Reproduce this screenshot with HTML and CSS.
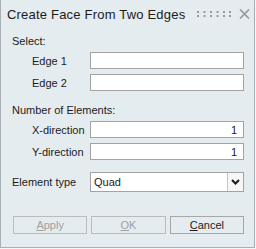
FILE: index.html
```html
<!DOCTYPE html>
<html lang="en">
<head>
    <meta charset="UTF-8">
    <title>Create Face From Two Edges</title>
    <link rel="stylesheet" href="styles.css">
</head>
<body>
    <div class="dialog">
        <div class="titlebar">
            <span class="title">Create Face From Two Edges</span>
            <svg class="grip" width="34" height="6" viewBox="0 0 34 6">
                <g fill="#9a9a9a">
                    <rect x="0" y="0" width="2" height="2"/><rect x="6.5" y="0" width="2" height="2"/>
                    <rect x="13" y="0" width="2" height="2"/><rect x="19.5" y="0" width="2" height="2"/>
                    <rect x="26" y="0" width="2" height="2"/><rect x="32" y="0" width="2" height="2"/>
                    <rect x="0" y="4" width="2" height="2"/><rect x="6.5" y="4" width="2" height="2"/>
                    <rect x="13" y="4" width="2" height="2"/><rect x="19.5" y="4" width="2" height="2"/>
                    <rect x="26" y="4" width="2" height="2"/><rect x="32" y="4" width="2" height="2"/>
                </g>
            </svg>
            <svg class="close" width="11" height="10" viewBox="0 0 11 10">
                <path d="M1 0.5 L10 9.5 M10 0.5 L1 9.5" stroke="#9a9a9a" stroke-width="1.7" fill="none"/>
            </svg>
        </div>

        <div class="content">
            <div class="heading heading-first">Select:</div>
            <div class="rows">
                <label class="sub">Edge 1</label>
                <input class="field" type="text">
                <label class="sub">Edge 2</label>
                <input class="field" type="text">
            </div>

            <div class="heading heading-next">Number of Elements:</div>
            <div class="rows">
                <label class="sub">X-direction</label>
                <input class="field num" type="text" value="1">
                <label class="sub">Y-direction</label>
                <input class="field num" type="text" value="1">
            </div>

            <div class="rows type-row">
                <label>Element type</label>
                <div class="combo">
                    <span class="combo-value">Quad</span>
                    <span class="combo-btn">
                        <svg width="9" height="6" viewBox="0 0 9 6">
                            <path d="M1 1 L4.5 4.5 L8 1" stroke="#1a1a1a" stroke-width="2" fill="none"/>
                        </svg>
                    </span>
                </div>
            </div>

            <div class="buttons">
                <button class="btn" disabled><u>A</u>pply</button>
                <button class="btn" disabled><u>O</u>K</button>
                <button class="btn"><u>C</u>ancel</button>
            </div>
        </div>
    </div>
</body>
</html>
```

FILE: styles.css
```css
:root {
    --dialog-bg: #e5ecf0;
    --dialog-border: #a9b0b5;
    --field-border: #a3a3a3;
    --text-color: #1b1b1b;
    --muted: #a0a0a0;
}

body {
    margin: 0;
    background: #f4f6f8;
    font-family: "Liberation Sans", Arial, sans-serif;
    font-size: 11px;
    color: var(--text-color);
}

.dialog {
    box-sizing: border-box;
    width: 255px;
    height: 248px;
    background: var(--dialog-bg);
    border: 1px solid var(--dialog-border);
    border-top: none;
}

.titlebar {
    height: 28px;
    display: flex;
    align-items: center;
    padding: 0 4px 0 6px;
}

.title {
    font-size: 13px;
    line-height: 16px;
    letter-spacing: 0.2px;
    padding-top: 1px;
}

.grip {
    margin-left: auto;
}

.close {
    margin-left: 8px;
}

.content {
    padding: 0 10px 0 11px;
}

.heading {
    line-height: 13px;
    margin-bottom: 4px;
}

.heading-first {
    margin-top: 7px;
}

.heading-next {
    margin-top: 13px;
}

.rows {
    display: grid;
    grid-template-columns: 78px 1fr;
    row-gap: 5px;
    align-items: center;
}

.sub {
    padding-left: 20px;
}

.field {
    box-sizing: border-box;
    height: 17px;
    margin: 0;
    border: 1px solid var(--field-border);
    background: #fff;
    font: inherit;
    color: var(--text-color);
    padding: 0 6px 0 3px;
    outline: none;
}

.field.num {
    text-align: right;
}

.type-row {
    margin-top: 12px;
}

.combo {
    box-sizing: border-box;
    height: 20px;
    display: flex;
    border: 1px solid var(--field-border);
    background: #fff;
}

.combo-value {
    flex: 1;
    padding-left: 3px;
    line-height: 18px;
}

.combo-btn {
    width: 15px;
    border-left: 1px solid #c4c4c4;
    display: flex;
    align-items: center;
    justify-content: center;
    background: #f7f7f7;
}

.buttons {
    margin-top: 24px;
    margin-left: 1px;
    display: grid;
    grid-template-columns: repeat(3, 1fr);
    column-gap: 4px;
}

.btn {
    box-sizing: border-box;
    height: 18px;
    margin: 0;
    padding: 0;
    border: 1px solid #a7a7a7;
    background: var(--dialog-bg);
    font: inherit;
    color: var(--text-color);
    line-height: 16px;
}

.btn:disabled {
    color: var(--muted);
    border-color: #b9bdc0;
}
```
